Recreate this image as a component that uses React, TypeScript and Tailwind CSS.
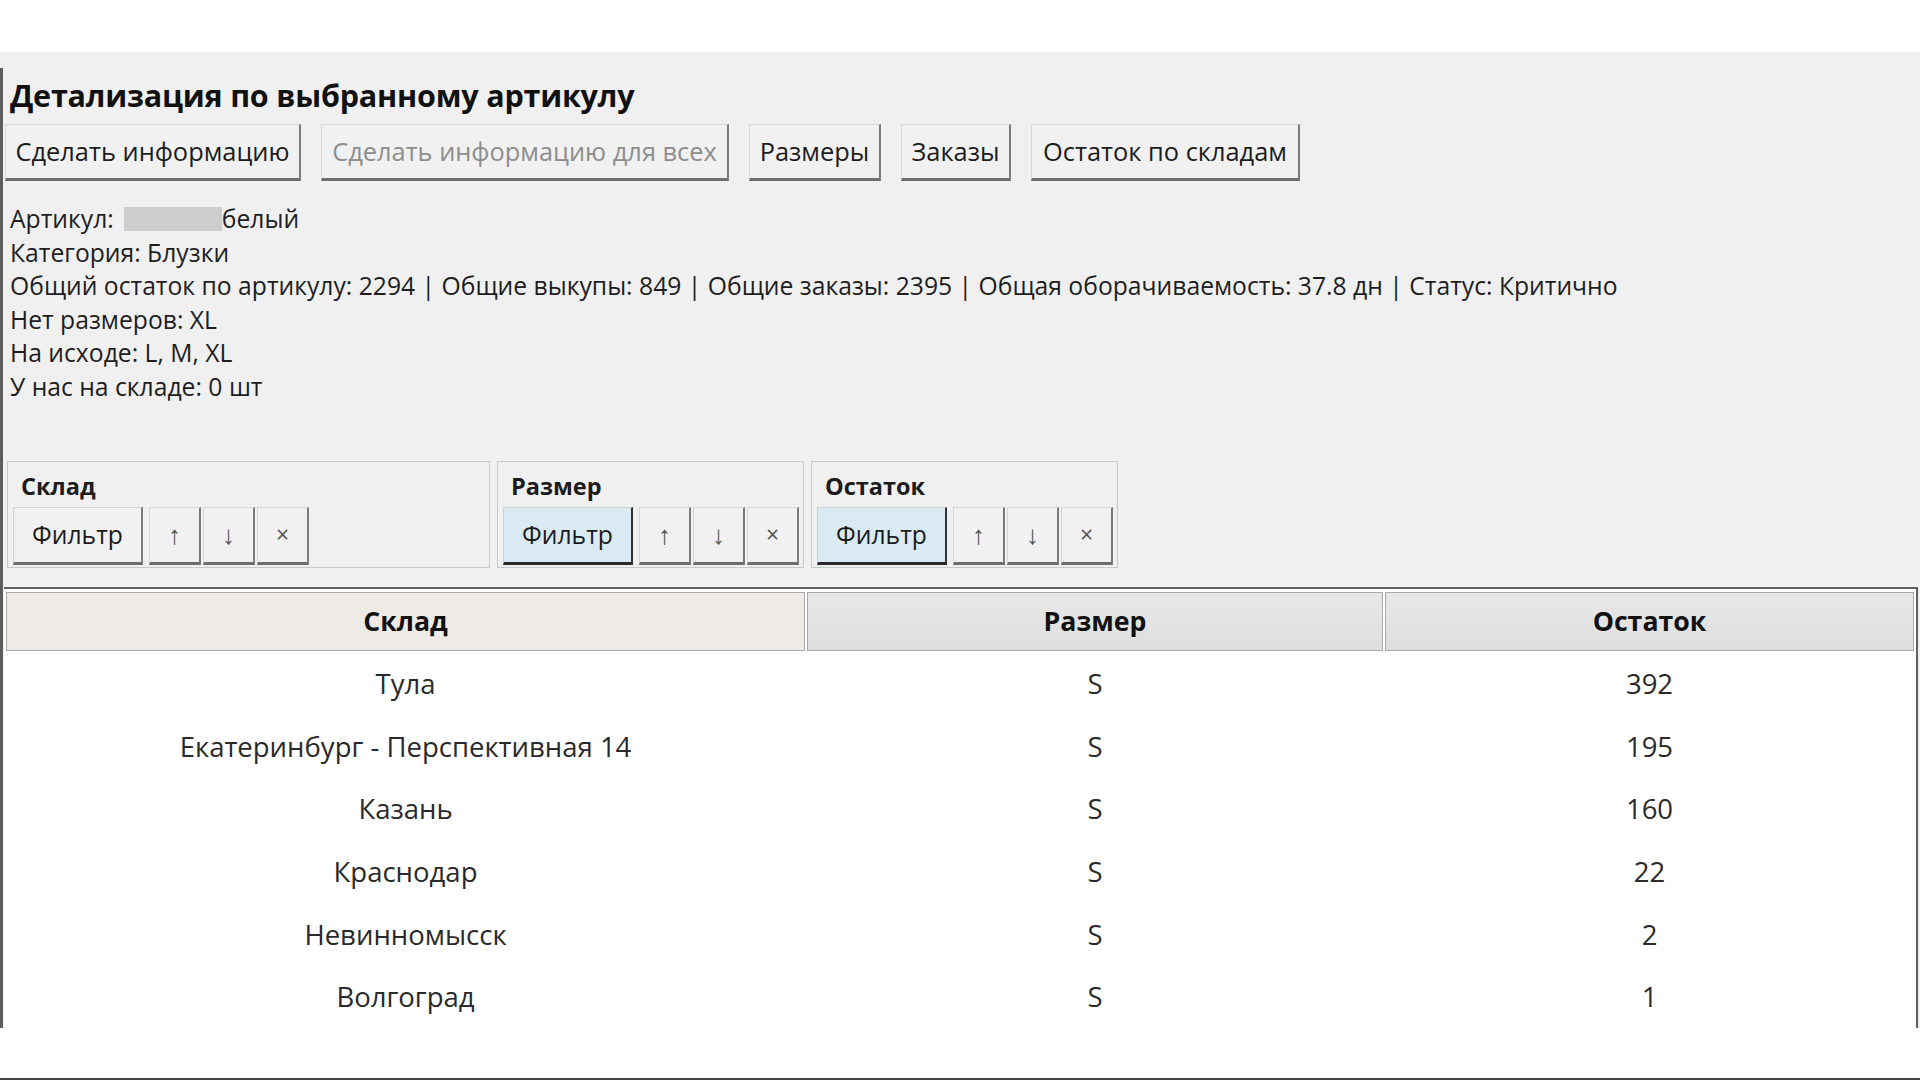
const topButtons = [
  { label: "Сделать информацию", w: "w-[296px]", disabled: false },
  { label: "Сделать информацию для всех", w: "w-[408px]", disabled: true },
  { label: "Размеры", w: "w-[132px]", disabled: false },
  { label: "Заказы", w: "w-[110px]", disabled: false },
  { label: "Остаток по складам", w: "w-[269px]", disabled: false },
];

const filters = [
  { title: "Склад", w: "w-[483px]", active: false },
  { title: "Размер", w: "w-[307px]", active: true },
  { title: "Остаток", w: "w-[307px]", active: true },
];

const rows = [
  { sklad: "Тула", size: "S", left: 392 },
  { sklad: "Екатеринбург - Перспективная 14", size: "S", left: 195 },
  { sklad: "Казань", size: "S", left: 160 },
  { sklad: "Краснодар", size: "S", left: 22 },
  { sklad: "Невинномысск", size: "S", left: 2 },
  { sklad: "Волгоград", size: "S", left: 1 },
];

function RaisedButton({ children, className = "" }: { children: React.ReactNode; className?: string }) {
  return (
    <div
      className={`flex items-center justify-center bg-[#f1f1f1] border-t border-l border-[#d6d6d6] border-r-2 border-b-[3px] border-r-[#7c7c7c] border-b-[#6e6e6e] ${className}`}
    >
      {children}
    </div>
  );
}

function FilterPanel({ title, w, active }: { title: string; w: string; active: boolean }) {
  return (
    <div className={`${w} h-[107px] border border-[#c9c9c9] flex flex-col pl-[5px]`}>
      <div className="pl-[8px] pt-[9px] h-[45px] text-[23.5px] font-bold text-[#1c1c1c] leading-[30px]">{title}</div>
      <div className="flex items-start">
        <div
          className={`w-[130px] h-[58px] flex items-center justify-center text-[24.7px] text-[#1c1c1c] border-t border-l border-[#d0d0d0] border-r-2 border-b-[3px] ${
            active ? "bg-[#d9eaf5] border-r-[#333] border-b-[#2a2a2a]" : "bg-[#f1f1f1] border-r-[#7c7c7c] border-b-[#6e6e6e]"
          }`}
        >
          Фильтр
        </div>
        <RaisedButton className="ml-[6px] w-[52px] h-[58px] text-[26px] text-[#555]">↑</RaisedButton>
        <RaisedButton className="ml-[2px] w-[52px] h-[58px] text-[26px] text-[#555]">↓</RaisedButton>
        <RaisedButton className="ml-[2px] w-[52px] h-[58px] text-[23px] text-[#555]">×</RaisedButton>
      </div>
    </div>
  );
}

export default function App() {
  return (
    <div className="w-[1920px] h-[1080px] bg-white flex flex-col overflow-hidden font-['Open_Sans','Noto_Sans',sans-serif] text-[#1e1e1e]">
      <div className="h-[52px] shrink-0" />

      {/* window body */}
      <div className="h-[976px] shrink-0 bg-[#f0f0f0] pt-[16px] flex flex-col">
        <div className="flex-1 border-l-[3px] border-[#5d5d5d] flex flex-col">
          <h1 className="mt-[9px] ml-[7px] h-[36px] text-[30.5px] leading-[36px] font-bold text-[#111] tracking-[-0.2px]">
            Детализация по выбранному артикулу
          </h1>

          {/* action buttons */}
          <div className="mt-[11px] ml-[2px] flex gap-[20px]">
            {topButtons.map((b) => (
              <RaisedButton key={b.label} className={`${b.w} h-[57px] text-[25.4px] ${b.disabled ? "text-[#8d8d8d]" : "text-[#1c1c1c]"}`}>
                {b.label}
              </RaisedButton>
            ))}
          </div>

          {/* info */}
          <div className="mt-[21px] ml-[7px] text-[24.7px] leading-[33.6px]">
            <div className="flex items-center">
              Артикул:
              <span className="inline-block w-[98px] h-[24px] bg-[#cdcdcd] ml-[10px]" />
              белый
            </div>
            <div>Категория: Блузки</div>
            <div>
              Общий остаток по артикулу: 2294 | Общие выкупы: 849 | Общие заказы: 2395 | Общая оборачиваемость: 37.8 дн | Статус: Критично
            </div>
            <div>Нет размеров: XL</div>
            <div>На исходе: L, M, XL</div>
            <div>У нас на складе: 0 шт</div>
          </div>

          {/* filters */}
          <div className="mt-[57px] ml-[4px] flex gap-[7px]">
            {filters.map((f) => (
              <FilterPanel key={f.title} {...f} />
            ))}
          </div>

          {/* table */}
          <div className="mt-[19px] ml-[1px] mr-[2px] flex-1 bg-white border-t-2 border-r-2 border-[#5f5f5f] flex flex-col">
            <div className="flex h-[62px] pt-[3px] px-[2px] gap-[2px]">
              <div className="w-[799px] flex items-center justify-center bg-[#eeebe7] border border-[#a9a9a9] text-[26.7px] font-bold text-[#111]">
                Склад
              </div>
              <div className="w-[576px] flex items-center justify-center bg-gradient-to-b from-[#e8e8e8] to-[#dedede] border border-[#a9a9a9] text-[26.7px] font-bold text-[#111]">
                Размер
              </div>
              <div className="flex-1 flex items-center justify-center bg-gradient-to-b from-[#e8e8e8] to-[#dedede] border border-[#a9a9a9] text-[26.7px] font-bold text-[#111]">
                Остаток
              </div>
            </div>
            <div className="pt-[2px] px-[2px] text-[27.5px] text-[#2a2a2a]">
              {rows.map((r) => (
                <div key={r.sklad} className="flex h-[62.6px] items-center gap-[2px]">
                  <div className="w-[799px] text-center">{r.sklad}</div>
                  <div className="w-[576px] text-center">{r.size}</div>
                  <div className="flex-1 text-center">{r.left}</div>
                </div>
              ))}
            </div>
          </div>
        </div>
      </div>

      <div className="flex-1 bg-white" />
      <div className="h-[2px] shrink-0 bg-[#444]" />
    </div>
  );
}
